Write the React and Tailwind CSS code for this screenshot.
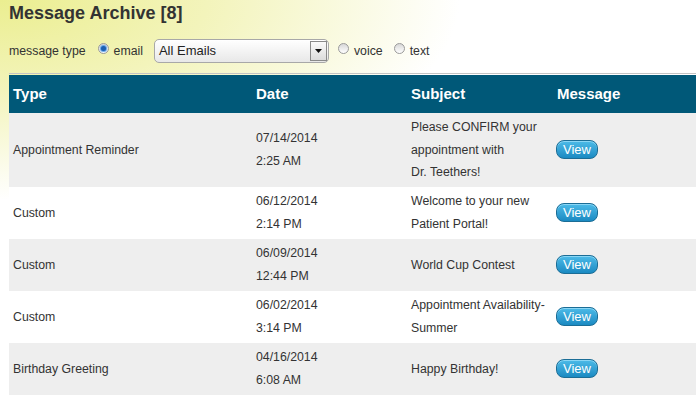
import React, { useState } from "react";

const rows = [
  { type: "Appointment Reminder", date: "07/14/2014", time: "2:25 AM", subject: ["Please CONFIRM your", "appointment with", "Dr. Teethers!"] },
  { type: "Custom", date: "06/12/2014", time: "2:14 PM", subject: ["Welcome to your new", "Patient Portal!"] },
  { type: "Custom", date: "06/09/2014", time: "12:44 PM", subject: ["World Cup Contest"] },
  { type: "Custom", date: "06/02/2014", time: "3:14 PM", subject: ["Appointment Availability-", "Summer"] },
  { type: "Birthday Greeting", date: "04/16/2014", time: "6:08 AM", subject: ["Happy Birthday!"] },
];

function Radio({ checked, label, onClick }) {
  return (
    <label className="flex items-center gap-[5px] cursor-pointer" onClick={onClick}>
      <span className="w-[11px] h-[11px] rounded-full border border-[#9a9a9a] bg-gradient-to-b from-[#d8d8d8] to-[#ffffff] flex items-center justify-center -mt-[6px]">
        {checked && <span className="w-[5px] h-[5px] rounded-full bg-[#1d5fb0] shadow-[0_0_1px_1px_#5aa0e8]" />}
      </span>
      <span>{label}</span>
    </label>
  );
}

export default function App() {
  const [kind, setKind] = useState("email");

  return (
    <div
      className="w-[696px] h-[395px] overflow-hidden pl-[9px] text-[12.3px] text-[#333] bg-[radial-gradient(ellipse_460px_200px_at_0_0,#ebee90_0%,#f3f4bb_45%,#ffffff_100%)]"
      style={{ fontFamily: '"Liberation Sans", Arial, sans-serif' }}
    >
      <h1 className="text-[18px] font-bold leading-[21px] pt-[3px] text-[#333]">Message Archive [8]</h1>

      <div className="flex items-center h-[24px] mt-[15px] leading-[14px]">
        <span className="mr-[12px]">message type</span>
        <Radio checked={kind === "email"} label="email" onClick={() => setKind("email")} />
        <div className="ml-[11px] w-[175px] h-[24px] rounded-[5px] border border-[#a8a8a8] bg-gradient-to-b from-[#ffffff] to-[#e8e8e8] flex items-center justify-between shadow-[inset_0_1px_1px_#fff]">
          <span className="pl-[4px] text-[13px] text-[#222]">All Emails</span>
          <span className="w-[17px] h-[20px] mr-[1px] border border-[#8a8a8a] bg-gradient-to-b from-[#fafafa] to-[#dcdcdc] flex items-center justify-center">
            <svg width="7" height="4" viewBox="0 0 7 4"><path d="M0 0h7L3.5 4z" fill="#111" /></svg>
          </span>
        </div>
        <div className="ml-[9px]">
          <Radio checked={kind === "voice"} label="voice" onClick={() => setKind("voice")} />
        </div>
        <div className="ml-[11px]">
          <Radio checked={kind === "text"} label="text" onClick={() => setKind("text")} />
        </div>
      </div>

      <div className="mt-[10px] border-t border-[#c4c4c4]">
        <div className="grid grid-cols-[243px_155px_146px_1fr] h-[38px] items-center bg-[#005878] text-white text-[15px] font-bold mt-[1px]">
          <div className="pl-[4px]">Type</div>
          <div className="pl-[4px]">Date</div>
          <div className="pl-[4px]">Subject</div>
          <div className="pl-[4px]">Message</div>
        </div>
        {rows.map((r, i) => (
          <div
            key={i}
            className={`grid grid-cols-[243px_155px_146px_1fr] items-center leading-[22.7px] ${
              i === 0 ? "h-[74px]" : "h-[52px]"
            } ${i % 2 === 0 ? "bg-[#eeeeee]" : "bg-white"}`}
          >
            <div className="pl-[4px]">{r.type}</div>
            <div className="pl-[4px]">
              <div>{r.date}</div>
              <div>{r.time}</div>
            </div>
            <div className="pl-[4px]">
              {r.subject.map((s, j) => (
                <div key={j}>{s}</div>
              ))}
            </div>
            <div className="pl-[3px]">
              <button className="w-[42px] h-[19px] rounded-[8px] border border-[#1b6d96] bg-gradient-to-b from-[#4cbbe8] to-[#1a8ac2] text-white text-[13px] leading-[17px] shadow-[inset_0_1px_0_#8ad6f5]">
                View
              </button>
            </div>
          </div>
        ))}
      </div>
    </div>
  );
}
